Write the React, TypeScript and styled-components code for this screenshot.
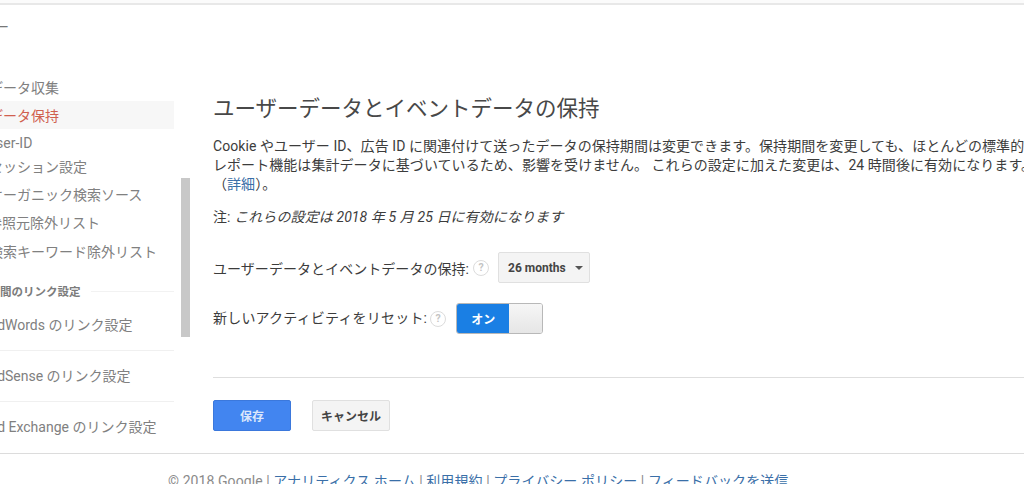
import React from "react";
import styled, { createGlobalStyle } from "styled-components";

const Global = createGlobalStyle`
  html, body { margin: 0; padding: 0; height: 484px; overflow: hidden; background: #fff; }
  body { font-family: Roboto, "Noto Sans CJK JP", sans-serif; color: #3c3c3c; }
  #root { height: 484px; overflow: hidden; }
`;

const TopBand = styled.div`
  height: 3px;
  background: #fbfbfb;
  border-bottom: 2px solid #e8e8e8;
`;

const Shell = styled.div`
  display: flex;
  height: 448px;
  border-bottom: 1px solid #dcdcdc;
  overflow: hidden;
`;

const Side = styled.nav`
  flex: 0 0 174px;
  width: 174px;
  overflow: hidden;
  display: flex;
  flex-direction: column;
  & > * { flex-shrink: 0; }
`;

const Stub = styled.div`
  height: 22px;
  margin: 11px 0 0 -5px;
  line-height: 22px;
  font-size: 14px;
  color: #777;
`;

const SectionList = styled.div`
  margin-top: 35px;
  display: flex;
  flex-direction: column;
`;

const NavRow = styled.div<{ $h: number; $active?: boolean }>`
  height: ${(p) => p.$h}px;
  line-height: ${(p) => p.$h + 2}px;
  font-size: 14px;
  white-space: nowrap;
  color: ${(p) => (p.$active ? "#d0604f" : "#808080")};
  background: ${(p) => (p.$active ? "#f7f7f7" : "transparent")};
`;

const NavText = styled.span<{ $x: number }>`
  display: inline-block;
  margin-left: ${(p) => p.$x}px;
`;

const GroupHead = styled.div`
  display: flex;
  align-items: center;
  height: 18px;
  margin-top: 13px;
  white-space: nowrap;
  font-size: 11.5px;
  font-weight: 700;
  color: #7c7c7c;
  &::after {
    content: "";
    flex: 1;
    height: 1px;
    margin-left: 10px;
    background: #f2f2f2;
  }
`;

const LinkRow = styled.div<{ $line?: boolean }>`
  height: 50px;
  line-height: 50px;
  font-size: 14px;
  white-space: nowrap;
  color: #808080;
  border-bottom: 1px solid ${(p) => (p.$line ? "#f0f0f0" : "transparent")};
`;

const ScrollColumn = styled.div`
  flex: 0 0 39px;
`;

const ScrollThumb = styled.div`
  width: 9px;
  height: 159px;
  margin: 173px 0 0 7px;
  background: #c8c8c8;
`;

const Main = styled.main`
  flex: 1;
  min-width: 0;
  display: flex;
  flex-direction: column;
  padding-top: 90px;
`;

const Title = styled.h1`
  margin: 0;
  font-size: 21.5px;
  line-height: 28px;
  font-weight: 400;
  color: #484848;
  white-space: nowrap;
`;

const Para = styled.p`
  margin: 14px 0 0;
  font-size: 14px;
  line-height: 19.2px;
  letter-spacing: 0.06px;
  white-space: nowrap;
`;

const Anchor = styled.a`
  color: #3a6fa8;
  text-decoration: none;
`;

const Note = styled.p`
  margin: 12px 0 0;
  font-size: 14px;
  line-height: 20px;
  letter-spacing: 0.1px;
  em { font-style: italic; }
`;

const FormRow = styled.div<{ $top: number; $track: number }>`
  display: flex;
  align-items: center;
  margin-top: ${(p) => p.$top}px;
  font-size: 14px;
  letter-spacing: ${(p) => p.$track}px;
`;

const FormLabel = styled.span<{ $lift?: number }>`
  padding-bottom: ${(p) => p.$lift ?? 0}px;
`;

const Help = styled.span<{ $gap: number; $end: number }>`
  box-sizing: border-box;
  width: 16px;
  height: 16px;
  margin: 0 ${(p) => p.$end}px 0 ${(p) => p.$gap}px;
  border: 1.5px solid #dcdcdc;
  border-radius: 50%;
  display: flex;
  align-items: center;
  justify-content: center;
  font-size: 10.5px;
  font-weight: 700;
  letter-spacing: 0;
  color: #c4c4c4;
`;

const SelectBox = styled.div`
  box-sizing: border-box;
  width: 92px;
  height: 31px;
  padding-left: 9px;
  display: flex;
  align-items: center;
  background: #f4f4f4;
  border: 1px solid #e0e0e0;
  border-radius: 2px;
  font-size: 12px;
  font-weight: 700;
  letter-spacing: 0;
  color: #444;
`;

const Caret = styled.span`
  margin-left: 9px;
  width: 0;
  height: 0;
  border-left: 4px solid transparent;
  border-right: 4px solid transparent;
  border-top: 4px solid #555;
`;

const Toggle = styled.div`
  box-sizing: border-box;
  width: 87px;
  height: 31px;
  display: flex;
  border-radius: 3px;
  border: 1px solid #b8b8b8;
  overflow: hidden;
`;

const ToggleOn = styled.div`
  flex: 0 0 52px;
  background: #1a7fe4;
  color: #fff;
  font-size: 12px;
  font-weight: 700;
  letter-spacing: 0;
  display: flex;
  align-items: center;
  justify-content: center;
`;

const ToggleKnob = styled.div`
  flex: 1;
  background: linear-gradient(#f6f6f6, #e6e6e6);
`;

const Rule = styled.div`
  height: 1px;
  margin-top: 43px;
  background: #dedede;
`;

const Actions = styled.div`
  display: flex;
  gap: 21px;
  margin-top: 22px;
`;

const Button = styled.button<{ $primary?: boolean }>`
  box-sizing: border-box;
  width: 78px;
  height: 31px;
  padding: 0;
  border-radius: 2px;
  font-family: inherit;
  font-size: 12px;
  font-weight: 700;
  color: ${(p) => (p.$primary ? "#dbe7fb" : "#444")};
  background: ${(p) => (p.$primary ? "#4285f0" : "#f4f4f4")};
  border: 1px solid ${(p) => (p.$primary ? "#3b78dc" : "#e0e0e0")};
`;

const Footer = styled.footer`
  padding: 18px 0 0 168px;
  font-size: 14px;
  line-height: 18px;
  letter-spacing: 0.08px;
  color: #8a8a8a;
  white-space: nowrap;
`;

const FooterLink = styled.a`
  color: #3a6fa8;
  text-decoration: none;
`;

export default function App() {
  return (
    <>
      <Global />
      <TopBand />
      <Shell>
        <Side>
          <Stub>ー</Stub>
          <SectionList>
            <NavRow $h={28}><NavText $x={-11}>データ収集</NavText></NavRow>
            <NavRow $h={28} $active><NavText $x={-11}>データ保持</NavText></NavRow>
            <NavRow $h={26}><NavText $x={-13}>User-ID</NavText></NavRow>
            <NavRow $h={22}><NavText $x={-11}>セッション設定</NavText></NavRow>
            <NavRow $h={34}><NavText $x={-11}>オーガニック検索ソース</NavText></NavRow>
            <NavRow $h={22}><NavText $x={-12}>参照元除外リスト</NavText></NavRow>
            <NavRow $h={36}><NavText $x={-11}>検索キーワード除外リスト</NavText></NavRow>
          </SectionList>
          <GroupHead><NavText $x={-46}>サービス間のリンク設定</NavText></GroupHead>
          <LinkRow $line><NavText $x={-12}>AdWords のリンク設定</NavText></LinkRow>
          <LinkRow $line><NavText $x={-12}>AdSense のリンク設定</NavText></LinkRow>
          <LinkRow><NavText $x={-12}>Ad Exchange のリンク設定</NavText></LinkRow>
        </Side>
        <ScrollColumn><ScrollThumb /></ScrollColumn>
        <Main>
          <Title>ユーザーデータとイベントデータの保持</Title>
          <Para>
            Cookie やユーザー ID、広告 ID に関連付けて送ったデータの保持期間は変更できます。保持期間を変更しても、ほとんどの標準的な
            <br />
            レポート機能は集計データに基づいているため、影響を受けません。 これらの設定に加えた変更は、24 時間後に有効になります。
            <br />
            （<Anchor>詳細</Anchor>）。
          </Para>
          <Note>注: <em>これらの設定は 2018 年 5 月 25 日に有効になります</em></Note>
          <FormRow $top={25.4} $track={0.05}>
            <FormLabel>ユーザーデータとイベントデータの保持:</FormLabel>
            <Help $gap={4} $end={9}>?</Help>
            <SelectBox>26 months<Caret /></SelectBox>
          </FormRow>
          <FormRow $top={20} $track={0.2}>
            <FormLabel $lift={4}>新しいアクティビティをリセット:</FormLabel>
            <Help $gap={3} $end={10}>?</Help>
            <Toggle><ToggleOn>オン</ToggleOn><ToggleKnob /></Toggle>
          </FormRow>
          <Rule />
          <Actions>
            <Button $primary>保存</Button>
            <Button>キャンセル</Button>
          </Actions>
        </Main>
      </Shell>
      <Footer>
        © 2018 Google | <FooterLink>アナリティクス ホーム</FooterLink> | <FooterLink>利用規約</FooterLink> | <FooterLink>プライバシー ポリシー</FooterLink> | <FooterLink>フィードバックを送信</FooterLink>
      </Footer>
    </>
  );
}
